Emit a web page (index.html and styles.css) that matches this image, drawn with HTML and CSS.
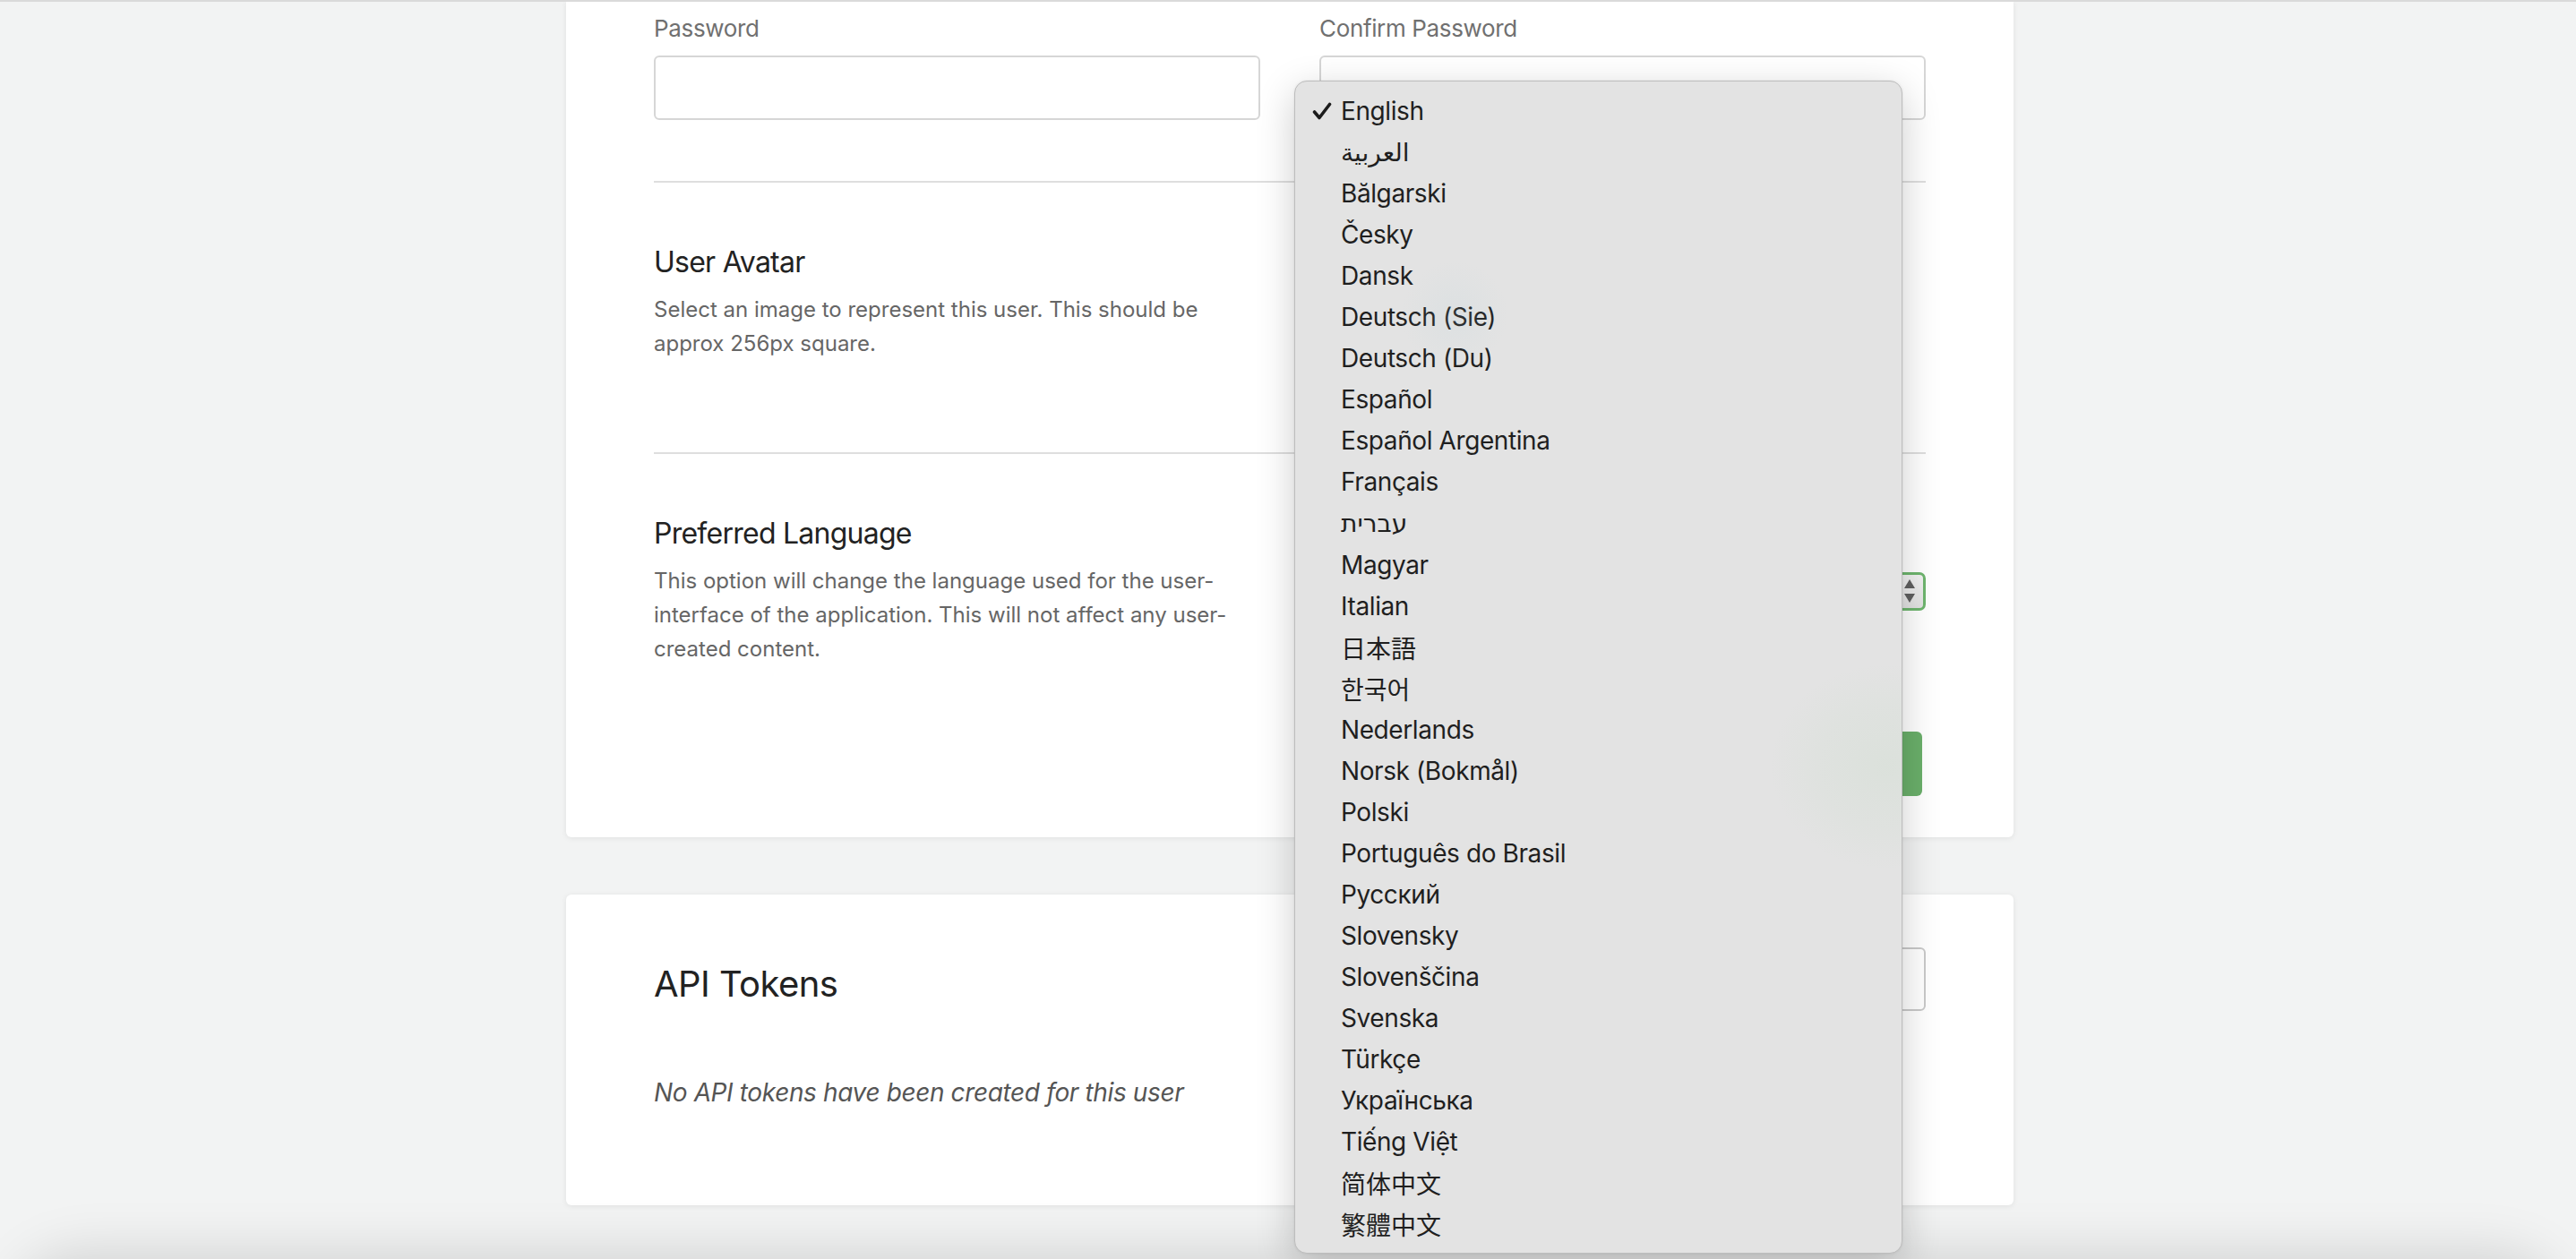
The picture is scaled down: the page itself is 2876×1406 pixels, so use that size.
FILE: index.html
```html
<!DOCTYPE html>
<html lang="en">
<head>
<meta charset="utf-8">
<title>Edit User</title>
<link rel="stylesheet" href="styles.css">
</head>
<body>
<main class="page">
  <section class="card card-profile">
    <div class="grid2">
      <div class="field">
        <label class="field-label">Password</label>
        <div class="input"></div>
      </div>
      <div class="field">
        <label class="field-label">Confirm Password</label>
        <div class="input"></div>
      </div>
    </div>
    <div class="divider"></div>
    <div class="setting setting-top">
      <div>
        <h3 class="setting-title">User Avatar</h3>
        <p class="setting-desc">Select an image to represent this user. This should be approx 256px square.</p>
      </div>
      <div class="avatar-control"></div>
    </div>
    <div class="divider"></div>
    <div class="setting">
      <div>
        <h3 class="setting-title">Preferred Language</h3>
        <p class="setting-desc">This option will change the language used for the user-interface of the application. This will not affect any user-created content.</p>
      </div>
      <div class="setting-control">
        <div class="select">
          <span class="select-value">English</span>
          <svg class="select-arrows" width="12" height="26" viewBox="0 0 12 26"><path d="M6 0 L12 10 H0 Z" fill="#5f5f5f"/><path d="M6 26 L12 16 H0 Z" fill="#5f5f5f"/></svg>
        </div>
      </div>
    </div>
    <div class="actions">
      <button class="btn">Save</button>
    </div>
  </section>

  <section class="card card-tokens">
    <div class="tokens-head">
      <h2 class="tokens-title">API Tokens</h2>
      <button class="btn-outline">Create Token</button>
    </div>
    <p class="tokens-empty">No API tokens have been created for this user</p>
  </section>
</main>

<div class="popup-menu">
  <div class="menu-item checked"><svg class="check" width="22" height="20" viewBox="0 0 22 20"><path d="M2.5 11 L8 17.5 L19.5 2.5" fill="none" stroke="#1c1c1c" stroke-width="3.6" stroke-linecap="round" stroke-linejoin="round"/></svg>English</div>
  <div class="menu-item" lang="ar">العربية</div>
  <div class="menu-item">Bălgarski</div>
  <div class="menu-item">Česky</div>
  <div class="menu-item">Dansk</div>
  <div class="menu-item">Deutsch (Sie)</div>
  <div class="menu-item">Deutsch (Du)</div>
  <div class="menu-item">Español</div>
  <div class="menu-item">Español Argentina</div>
  <div class="menu-item">Français</div>
  <div class="menu-item" lang="he">עברית</div>
  <div class="menu-item">Magyar</div>
  <div class="menu-item">Italian</div>
  <div class="menu-item" lang="ja">日本語</div>
  <div class="menu-item" lang="ko">한국어</div>
  <div class="menu-item">Nederlands</div>
  <div class="menu-item">Norsk (Bokmål)</div>
  <div class="menu-item">Polski</div>
  <div class="menu-item">Português do Brasil</div>
  <div class="menu-item">Русский</div>
  <div class="menu-item">Slovensky</div>
  <div class="menu-item">Slovenščina</div>
  <div class="menu-item">Svenska</div>
  <div class="menu-item">Türkçe</div>
  <div class="menu-item">Українська</div>
  <div class="menu-item">Tiếng Việt</div>
  <div class="menu-item" lang="zh-CN">简体中文</div>
  <div class="menu-item" lang="zh-TW">繁體中文</div>
  <div class="glow glow-green"></div>
  <div class="glow glow-blue"></div>
</div>

<div class="window-edge"></div>
</body>
</html>
```

FILE: styles.css
```css
* {
  box-sizing: border-box;
}

html,
body {
  margin: 0;
}

body {
  position: relative;
  height: 1406px;
  overflow: hidden;
  background: #f2f3f3;
  border-top: 2px solid #dadada;
  padding-left: 4px;
  font-family: Inter, "Liberation Sans", "DejaVu Sans", sans-serif;
  color: #222;
}

.page {
  width: 1616px;
  margin: 0 auto;
  display: flex;
  flex-direction: column;
  gap: 64px;
}

.card {
  background: #fff;
  box-shadow: 0 1px 6px rgba(0, 0, 0, 0.08);
}

.card-profile {
  border-radius: 0 0 6px 6px;
  padding: 12px 98px 46px;
}

.card-tokens {
  border-radius: 6px;
  padding: 59px 98px 106px;
}

.grid2 {
  display: grid;
  grid-template-columns: 1fr 1fr;
  column-gap: 66px;
}

.field-label {
  display: block;
  font-size: 26px;
  line-height: 36px;
  letter-spacing: -0.35px;
  color: #707070;
  margin-bottom: 12px;
}

.input {
  height: 72px;
  border: 2px solid #d6d6d6;
  border-radius: 6px;
  background: #fff;
}

.divider {
  height: 2px;
  background: #dedede;
  margin-top: 68px;
}

.setting {
  display: grid;
  grid-template-columns: 1fr 1fr;
  column-gap: 66px;
  align-items: center;
  padding-top: 69px;
}

.setting-top {
  align-items: start;
}

.avatar-control {
  height: 164px;
}

.setting-title {
  margin: 0 0 14px;
  font-size: 32px;
  line-height: 40px;
  letter-spacing: -0.75px;
  font-weight: 400;
  color: #222;
}

.setting-desc {
  margin: 0;
  font-size: 24px;
  line-height: 38px;
  color: #666;
}

.setting-control {
  display: flex;
  justify-content: flex-end;
}

.select {
  width: 420px;
  height: 43px;
  border: 3px solid #6eb56e;
  border-radius: 7px;
  background: linear-gradient(#f2f2f2, #e2e2e2);
  display: flex;
  align-items: center;
  justify-content: space-between;
  padding: 0 9px 0 14px;
  font-size: 24px;
  color: #222;
}

.actions {
  display: flex;
  justify-content: flex-end;
  padding-right: 4px;
  margin-top: 73px;
}

.btn {
  height: 72px;
  width: 150px;
  border: 0;
  border-radius: 6px;
  background: #6aaf6a;
  color: #fff;
  font-family: inherit;
  font-size: 26px;
}

.tokens-head {
  display: flex;
  justify-content: space-between;
  align-items: center;
}

.tokens-title {
  margin: 11px 0 0;
  font-size: 40px;
  line-height: 48px;
  letter-spacing: -0.55px;
  font-weight: 400;
  color: #222;
}

.btn-outline {
  height: 71px;
  width: 260px;
  border: 2px solid #c9c9c9;
  border-radius: 6px;
  background: #fff;
  color: #444;
  font-family: inherit;
  font-size: 26px;
}

.tokens-empty {
  margin: 71px 0 0;
  font-size: 28px;
  line-height: 40px;
  letter-spacing: -0.37px;
  font-style: italic;
  color: #555;
}

/* native popup menu over the page */
.popup-menu {
  position: absolute;
  left: 1445px;
  top: 88px;
  width: 679px;
  height: 1310px;
  padding: 10px 0 8px;
  overflow: hidden;
  background: #e3e3e3;
  border: 1px solid #bdbdbd;
  border-radius: 14px;
  box-shadow: 0 12px 44px rgba(0, 0, 0, 0.2), 0 0 3px rgba(0, 0, 0, 0.08);
  z-index: 5;
}

.menu-item {
  position: relative;
  height: 46.06px;
  display: flex;
  align-items: center;
  padding-left: 51px;
  font-size: 28px;
  letter-spacing: -0.4px;
  color: #1f1f1f;
  font-family: Inter, "DejaVu Sans", "Noto Sans CJK SC", sans-serif;
  white-space: nowrap;
}

.menu-item:lang(ar),
.menu-item:lang(he) {
  font-family: "DejaVu Sans", sans-serif;
  letter-spacing: 0;
}

.menu-item:lang(ja) {
  font-family: "Noto Sans CJK JP", sans-serif;
  letter-spacing: 0;
}

.menu-item:lang(ko) {
  font-family: "Noto Sans CJK KR", sans-serif;
  letter-spacing: 0;
}

.menu-item:lang(zh-CN) {
  font-family: "Noto Sans CJK SC", sans-serif;
  letter-spacing: 0;
}

.menu-item:lang(zh-TW) {
  font-family: "Noto Sans CJK TC", sans-serif;
  letter-spacing: 0;
}

.check {
  position: absolute;
  left: 19px;
  top: 13px;
}

.glow {
  position: absolute;
  border-radius: 50%;
  pointer-events: none;
}

.glow-green {
  left: 530px;
  top: 650px;
  width: 260px;
  height: 230px;
  background: radial-gradient(closest-side, rgba(150, 205, 150, 0.1), rgba(150, 205, 150, 0.05) 60%, rgba(150, 205, 150, 0));
}

.glow-blue {
  left: 118px;
  top: 200px;
  width: 120px;
  height: 120px;
  background: radial-gradient(closest-side, rgba(170, 205, 215, 0.12), rgba(170, 205, 215, 0));
}

/* shadow of the window edge along the bottom of the screen */
.window-edge {
  position: absolute;
  left: 0;
  right: 0;
  bottom: 0;
  height: 110px;
  overflow: hidden;
  pointer-events: none;
  z-index: 4;
}

.window-edge::before {
  content: "";
  position: absolute;
  left: 30px;
  right: 30px;
  top: 118px;
  height: 200px;
  border-radius: 60px;
  background: #d6d6d6;
  box-shadow: 0 0 60px 16px rgba(0, 0, 0, 0.13);
}
```
